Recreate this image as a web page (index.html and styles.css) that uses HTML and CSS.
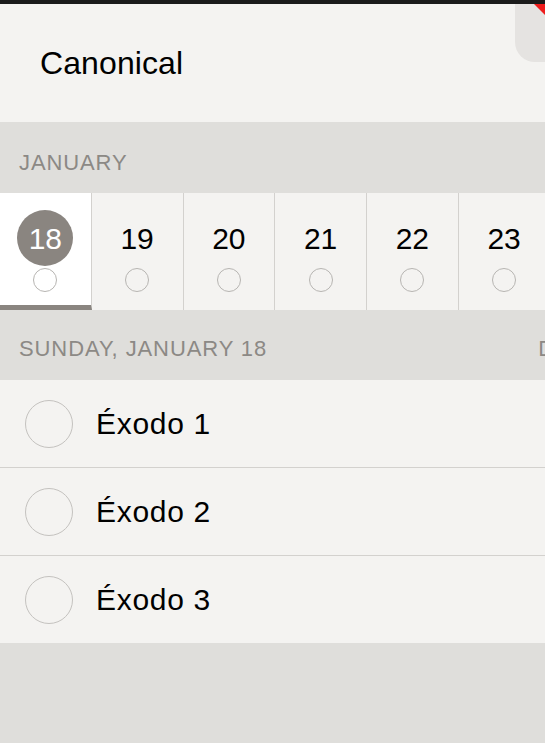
FILE: index.html
```html
<!DOCTYPE html>
<html>
<head>
<meta charset="utf-8">
<link rel="stylesheet" href="styles.css">
</head>
<body>
<div class="statusbar"></div>
<div class="topbar">
    <h1>Canonical</h1>
    <div class="corner"><span class="ribbon"></span></div>
</div>
<div class="section-label">January</div>
<div class="days">
    <div class="day selected"><span class="num">18</span><span class="dot"></span></div>
    <div class="day"><span class="num">19</span><span class="dot"></span></div>
    <div class="day"><span class="num">20</span><span class="dot"></span></div>
    <div class="day"><span class="num">21</span><span class="dot"></span></div>
    <div class="day"><span class="num">22</span><span class="dot"></span></div>
    <div class="day"><span class="num">23</span><span class="dot"></span></div>
</div>
<div class="day-head">
    <span>Sunday, January 18</span>
    <span class="next">D</span>
</div>
<ul class="readings">
    <li><span class="check"></span>Éxodo 1</li>
    <li><span class="check"></span>Éxodo 2</li>
    <li><span class="check"></span>Éxodo 3</li>
</ul>
</body>
</html>
```
FILE: styles.css
```css
* {
    margin:0;
    padding:0;
    box-sizing:border-box;
}
html, body {
    height:100%;
}
body {
    background:#dfdedb;
    font-family:"Liberation Sans", Arial, sans-serif;
    color:#000;
    overflow:hidden;
    width:545px;
}

.statusbar {
    height:4px;
    background:#1b1b1b;
}

.topbar {
    position:relative;
    height:118px;
    background:#f4f3f1;
    display:flex;
    align-items:center;
    padding-left:40px;
}
.topbar h1 {
    font-weight:normal;
    font-size:32px;
    letter-spacing:0.1px;
    margin-top:1px;
}
.corner {
    position:absolute;
    top:0;
    right:-20px;
    width:50px;
    height:58px;
    background:#e5e3e1;
    border-bottom-left-radius:20px;
    overflow:hidden;
}
.ribbon {
    position:absolute;
    top:0;
    right:20px;
    width:11px;
    height:11px;
    background:#ee1c1c;
    clip-path:polygon(0 0, 100% 0, 100% 100%);
}

.section-label, .day-head {
    color:#8c8985;
    font-size:22px;
    letter-spacing:0.9px;
    text-transform:uppercase;
    padding-left:19px;
}
.section-label {
    height:71px;
    padding-top:30px;
    line-height:22px;
}

.days {
    display:grid;
    grid-template-columns:repeat(6, 91.75px);
    height:117px;
    background:#f4f3f1;
    overflow:hidden;
}
.day {
    display:flex;
    flex-direction:column;
    align-items:center;
    padding-top:17px;
    border-right:1px solid #d3d1ce;
}
.day.selected {
    background:#fff;
    border-bottom:5px solid #8a8580;
}
.num {
    width:56px;
    height:56px;
    border-radius:50%;
    display:flex;
    align-items:center;
    justify-content:center;
    font-size:30px;
    padding-top:1px;
}
.selected .num {
    background:#8a8580;
    color:#fff;
}
.dot {
    margin-top:2px;
    width:24px;
    height:24px;
    border:1.5px solid #b7b5b2;
    border-radius:50%;
}

.day-head {
    height:70px;
    padding-top:28px;
    line-height:22px;
    display:flex;
    justify-content:space-between;
}
.day-head .next {
    margin-right:-10px;
}

.readings {
    list-style:none;
    background:#f4f3f1;
}
.readings li {
    height:88px;
    display:flex;
    align-items:center;
    padding-left:25px;
    font-size:30px;
    letter-spacing:0.7px;
    border-bottom:1px solid #d3d1ce;
}
.readings li:last-child {
    border-bottom:none;
    height:87px;
}
.check {
    width:48px;
    height:48px;
    border:1.5px solid #c4c2bf;
    border-radius:50%;
    margin-right:23px;
}
```
